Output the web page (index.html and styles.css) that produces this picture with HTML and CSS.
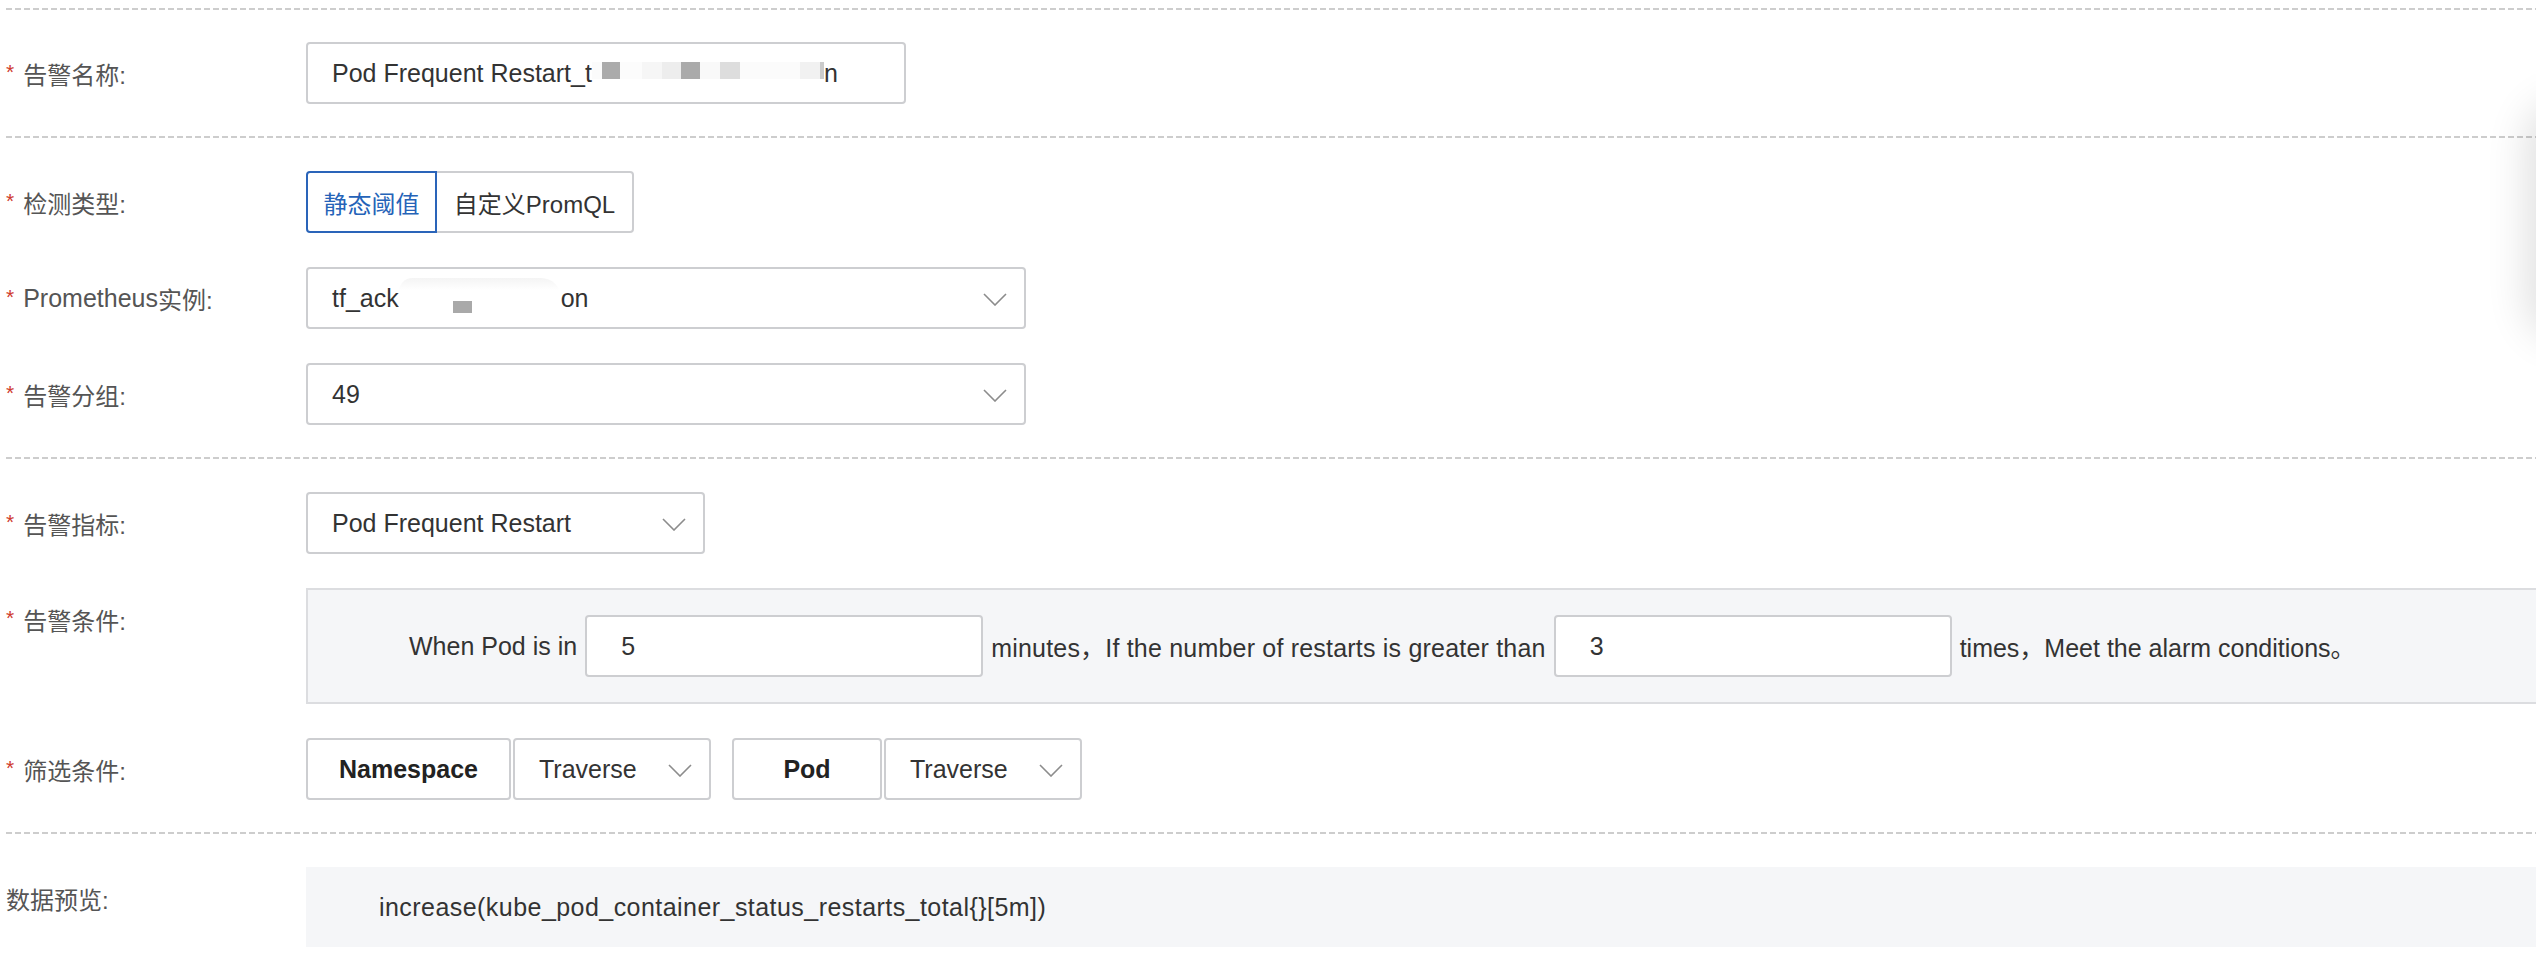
FILE: index.html
```html
<!DOCTYPE html>
<html lang="zh-CN">
<head>
<meta charset="utf-8">
<title>告警规则</title>
<link rel="stylesheet" href="styles.css">
</head>
<body>
<div class="page">
  <div class="divider"></div>

  <section class="group first">
    <div class="row">
      <div class="label"><span class="req">*</span>告警名称:</div>
      <div class="field">
        <div class="control name-input">
          <span>Pod Frequent Restart_t</span><span class="mosaic"><i class="m1"></i><i class="m2"></i><i class="m3"></i><i class="m4"></i><i class="m5"></i><i class="m6"></i><i class="m7"></i><i class="m8"></i><i class="m9"></i><i class="m10"></i><i class="m11"></i></span><span>n</span>
        </div>
      </div>
    </div>
  </section>

  <div class="divider"></div>

  <section class="group">
    <div class="row">
      <div class="label"><span class="req">*</span>检测类型:</div>
      <div class="field">
        <div class="seg">
          <button class="seg-btn active">静态阈值</button>
          <button class="seg-btn">自定义PromQL</button>
        </div>
      </div>
    </div>
    <div class="row">
      <div class="label"><span class="req">*</span><span class="latin">Prometheus</span>实例:</div>
      <div class="field">
        <div class="control select wide">
          <span>tf_ack</span><span class="smudge"><i></i></span><span>on</span>
          <svg class="chev" viewBox="0 0 24 13" width="24" height="13"><polyline points="1,1 12,12 23,1"/></svg>
        </div>
      </div>
    </div>
    <div class="row">
      <div class="label"><span class="req">*</span>告警分组:</div>
      <div class="field">
        <div class="control select wide">
          <span>49</span>
          <svg class="chev" viewBox="0 0 24 13" width="24" height="13"><polyline points="1,1 12,12 23,1"/></svg>
        </div>
      </div>
    </div>
  </section>

  <div class="divider"></div>

  <section class="group">
    <div class="row">
      <div class="label"><span class="req">*</span>告警指标:</div>
      <div class="field">
        <div class="control select metric">
          <span>Pod Frequent Restart</span>
          <svg class="chev" viewBox="0 0 24 13" width="24" height="13"><polyline points="1,1 12,12 23,1"/></svg>
        </div>
      </div>
    </div>
    <div class="row">
      <div class="label"><span class="req">*</span>告警条件:</div>
      <div class="field">
        <div class="condition">
          <span>When Pod is in</span>
          <div class="control num">5</div>
          <span class="mid">minutes，If the number of restarts is greater than</span>
          <div class="control num">3</div>
          <span>times，Meet the alarm conditions。</span>
        </div>
      </div>
    </div>
    <div class="row">
      <div class="label"><span class="req">*</span>筛选条件:</div>
      <div class="field">
        <div class="filters">
          <div class="filter">
            <div class="control tag ns">Namespace</div>
            <div class="control select trav">
              <span>Traverse</span>
              <svg class="chev" viewBox="0 0 24 13" width="24" height="13"><polyline points="1,1 12,12 23,1"/></svg>
            </div>
          </div>
          <div class="filter">
            <div class="control tag pod">Pod</div>
            <div class="control select trav">
              <span>Traverse</span>
              <svg class="chev" viewBox="0 0 24 13" width="24" height="13"><polyline points="1,1 12,12 23,1"/></svg>
            </div>
          </div>
        </div>
      </div>
    </div>
  </section>

  <div class="divider"></div>

  <section class="group">
    <div class="row">
      <div class="label">数据预览:</div>
      <div class="field">
        <div class="preview">increase(kube_pod_container_status_restarts_total{}[5m])</div>
      </div>
    </div>
  </section>

  <div class="edge-shadow"></div>
</div>
</body>
</html>
```

FILE: styles.css
```css
html, body {
  margin: 0;
  padding: 0;
  background: #ffffff;
  overflow: hidden;
}

body {
  font-family: "Liberation Sans", "Noto Sans CJK SC", sans-serif;
  font-size: 24px;
  color: #333333;
}

.page {
  position: relative;
  padding: 8px 0 0 6px;
  height: 952px;
}

/* dashed separators between form sections */
.divider {
  height: 2px;
  background: repeating-linear-gradient(to right, #cdcdcd 0 6px, transparent 6px 9px);
}

.group {
  display: flex;
  flex-direction: column;
  gap: 34px;
  padding: 33px 0 32px;
}

.group.first {
  padding-top: 32px;
}

.row {
  display: grid;
  grid-template-columns: 300px 1fr;
  align-items: start;
}

.label {
  height: 62px;
  display: flex;
  align-items: center;
  color: #555555;
  white-space: nowrap;
}

.label .latin {
  font-size: 25px;
}

.req {
  color: #cf3a2e;
  font-size: 21px;
  margin-right: 9px;
  position: relative;
  top: -1px;
}

.field {
  min-width: 0;
}

/* generic bordered control */
.control {
  box-sizing: border-box;
  height: 62px;
  border: 2px solid #cdced1;
  border-radius: 4px;
  background: #ffffff;
  display: flex;
  align-items: center;
  padding: 0 24px;
  font-size: 25px;
  color: #333333;
  white-space: nowrap;
}

.name-input {
  width: 600px;
}

.mosaic {
  display: inline-flex;
  height: 17px;
  margin-top: -6px;
}

.mosaic i {
  display: block;
  height: 17px;
}

.mosaic .m1 { width: 10px; background: #fbfbfb; }
.mosaic .m2 { width: 18px; background: #ababab; }
.mosaic .m3 { width: 22px; background: #fcfcfc; }
.mosaic .m4 { width: 20px; background: #f6f6f6; }
.mosaic .m5 { width: 19px; background: #ededed; }
.mosaic .m6 { width: 19px; background: #aaaaaa; }
.mosaic .m7 { width: 20px; background: #f9f9f9; }
.mosaic .m8 { width: 20px; background: #dddddd; }
.mosaic .m9 { width: 60px; background: #fbfbfb; }
.mosaic .m10 { width: 20px; background: #f1f1f1; }
.mosaic .m11 { width: 4px; background: #cbcbcb; }

.smudge {
  display: inline-block;
  position: relative;
  width: 162px;
  height: 40px;
  background: linear-gradient(to bottom, #f4f4f4 0, #ffffff 30%, #ffffff 100%);
  border-radius: 20px 30px 30px 8px;
}

.smudge i {
  position: absolute;
  left: 54px;
  top: 23px;
  width: 19px;
  height: 12px;
  background: #a9a9a9;
}

.select {
  position: relative;
  padding-right: 60px;
}

.chev {
  position: absolute;
  right: 17px;
  top: 24px;
  fill: none;
  stroke: #8c8c8c;
  stroke-width: 1.6;
}

.wide {
  width: 720px;
}

.metric {
  width: 399px;
}

/* segmented switch */
.seg {
  display: flex;
}

.seg-btn {
  box-sizing: border-box;
  height: 62px;
  font: inherit;
  font-size: 24px;
  background: #ffffff;
  color: #333333;
  border: 2px solid #cdced1;
  padding: 0;
  margin: 0;
  white-space: nowrap;
  text-align: center;
  cursor: pointer;
}

.seg-btn:first-child {
  border-radius: 4px 0 0 4px;
  width: 131px;
}

.seg-btn:last-child {
  border-radius: 0 4px 4px 0;
  border-left: none;
  width: 197px;
}

.seg-btn.active {
  border-color: #2a64b9;
  color: #2563b8;
}

/* threshold condition sentence */
.condition {
  box-sizing: border-box;
  height: 116px;
  display: flex;
  align-items: center;
  padding-left: 101px;
  background: #f5f6f8;
  border: 2px solid #dcdde0;
  border-right: none;
  font-size: 25px;
  white-space: nowrap;
}

.condition .mid {
  letter-spacing: 0.2px;
}

.num {
  width: 398px;
  margin: 0 8px;
  padding-left: 34px;
}

/* label filters */
.filters {
  display: flex;
  gap: 21px;
}

.filter {
  display: flex;
  gap: 2px;
}

.tag {
  justify-content: center;
  font-weight: bold;
  color: #222222;
  padding: 0;
}

.ns {
  width: 205px;
}

.pod {
  width: 150px;
}

.trav {
  width: 198px;
}

.preview {
  box-sizing: border-box;
  height: 80px;
  display: flex;
  align-items: center;
  padding-left: 73px;
  background: #f5f6f8;
  font-size: 25px;
  letter-spacing: 0.45px;
}

/* soft shadow cast by the panel just past the right edge */
.edge-shadow {
  position: absolute;
  right: -70px;
  top: 110px;
  width: 70px;
  height: 220px;
  border-radius: 30px;
  box-shadow: 0 0 40px 10px rgba(0, 0, 0, 0.12);
}
```
